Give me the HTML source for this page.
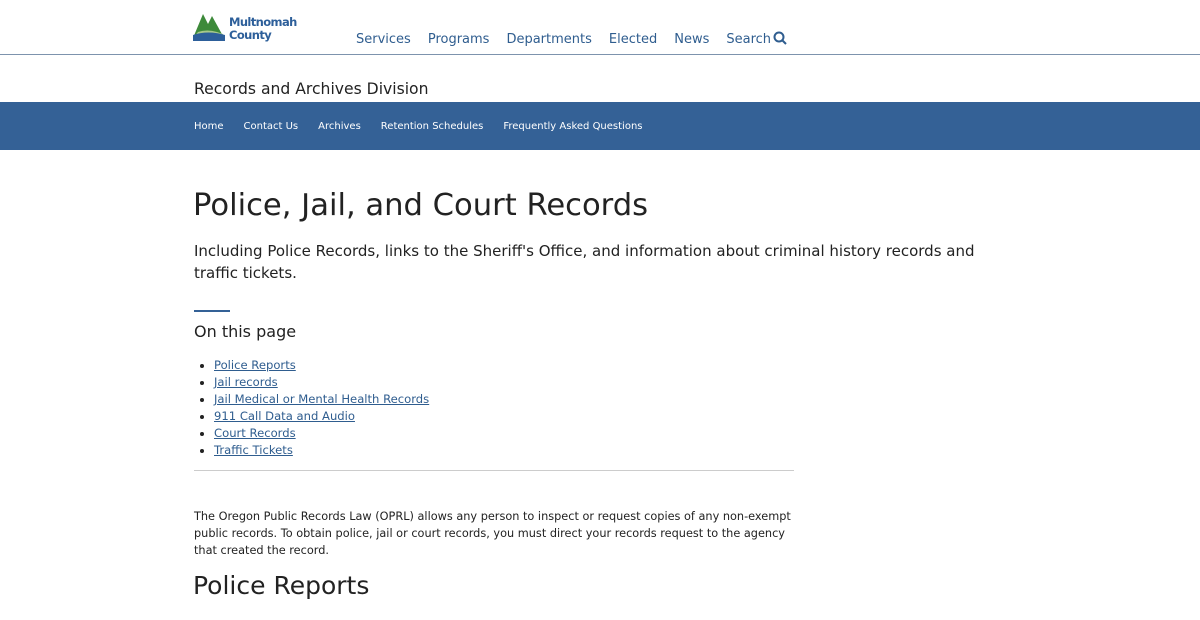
<!DOCTYPE html>
<html><head><style>
body{margin:0;font-family:"DejaVu Sans","Liberation Sans",sans-serif;color:#222;background:#fff;width:1200px;height:620px;overflow:hidden;position:relative}
.a{position:absolute;white-space:nowrap}
.nav a{color:#2f5d8f;font-size:13px;text-decoration:none;margin-right:17px}
.sub a{color:#fff;font-size:10px;margin-right:20px}
ul{margin:0;padding-left:20px;font-size:11.6px;line-height:17px}
ul a{color:#2f5d8f;text-decoration:underline}
</style></head><body>
<svg class="a" style="left:193px;top:12px" width="36" height="30" viewBox="0 0 36 30">
<path d="M0 26 L10 2 L15 12 L19 4 L30 24 Z" fill="#3d8a3a"/>
<path d="M5 20 Q14 17 24 20 L30 22 L30 24 L0 26Z" fill="#a7c88a"/>
<path d="M0 23 Q15 18 32 23 L32 29 L0 29Z" fill="#2d5f9a"/>
</svg>
<div class="a" style="left:229px;top:16px;font-size:11.5px;font-weight:bold;color:#2d5f9a;line-height:13px;letter-spacing:-0.6px">Multnomah<br>County</div>
<div class="a nav" style="left:356px;top:28px">
<a>Services</a><a>Programs</a><a>Departments</a><a>Elected</a><a>News</a><a>Search<svg width="14" height="14" viewBox="0 0 14 14" style="vertical-align:-2px;margin-left:2px"><circle cx="6" cy="6" r="4.5" stroke="#2f5d8f" stroke-width="2" fill="none"/><path d="M9 9 L13 13" stroke="#2f5d8f" stroke-width="2"/></svg></a></div>
<div class="a" style="left:0;top:54px;width:1200px;height:1px;background:#7d93ad"></div>
<div class="a" style="left:194px;top:80px;font-size:15.6px">Records and Archives Division</div>
<div class="a" style="left:0;top:102px;width:1200px;height:48px;background:#346196"></div>
<div class="a sub" style="left:194px;top:114px"><a>Home</a><a>Contact Us</a><a>Archives</a><a>Retention Schedules</a><a>Frequently Asked Questions</a></div>
<div class="a" style="left:193px;top:188px;font-size:30.6px">Police, Jail, and Court Records</div>
<div class="a" style="left:194px;top:240px;font-size:15px;line-height:22px;white-space:normal;width:800px">Including Police Records, links to the Sheriff's Office, and information about criminal history records and traffic tickets.</div>
<div class="a" style="left:194px;top:310px;width:36px;height:2px;background:#346196"></div>
<div class="a" style="left:194px;top:322px;font-size:16px">On this page</div>
<div class="a" style="left:194px;top:357px"><ul>
<li><a>Police Reports</a></li><li><a>Jail records</a></li><li><a>Jail Medical or Mental Health Records</a></li><li><a>911 Call Data and Audio</a></li><li><a>Court Records</a></li><li><a>Traffic Tickets</a></li></ul></div>
<div class="a" style="left:194px;top:470px;width:600px;height:1px;background:#ccc"></div>
<div class="a" style="left:194px;top:508px;font-size:11.3px;line-height:17px;white-space:normal;width:610px">The Oregon Public Records Law (OPRL) allows any person to inspect or request copies of any non-exempt public records. To obtain police, jail or court records, you must direct your records request to the agency that created the record.</div>
<div class="a" style="left:193px;top:571px;font-size:25px">Police Reports</div>
</body></html>
